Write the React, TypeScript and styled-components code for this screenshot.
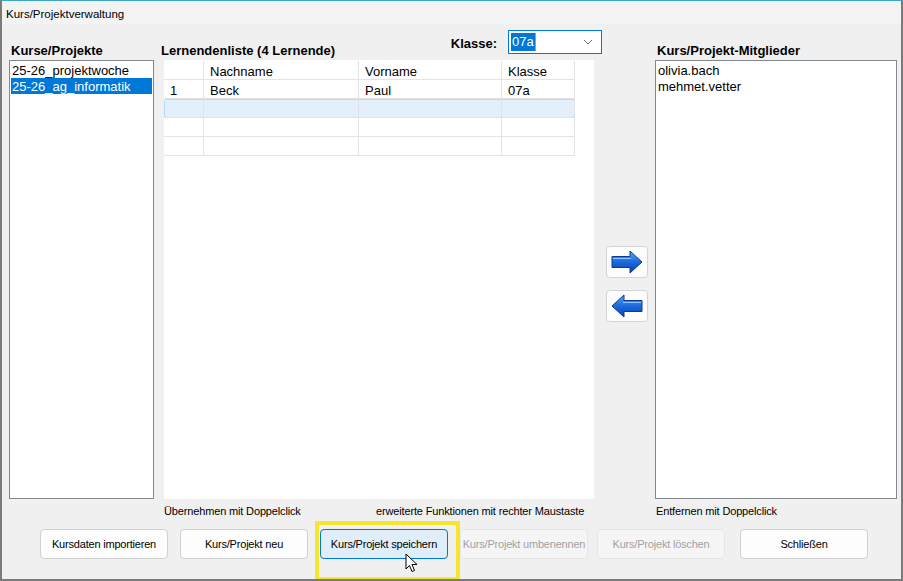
import React from 'react'
import styled, { createGlobalStyle } from 'styled-components'

const GlobalStyle = createGlobalStyle`
  html, body {
    margin: 0;
    padding: 0;
    background: #ffffff;
  }
  * {
    box-sizing: border-box;
  }
`

const FONT = `"Liberation Sans", Arial, sans-serif`

const Window = styled.div`
  position: relative;
  width: 903px;
  height: 581px;
  display: flex;
  flex-direction: column;
  background: #f0f0f0;
  border: 2px solid #7a7a7a;
  border-top: 1px solid #3aa6c6;
  font-family: ${FONT};
  color: #000;
  overflow: hidden;
`

const TitleBar = styled.div`
  height: 23px;
  display: flex;
  align-items: center;
  padding: 2px 0 0 4px;
  background: #f3f3f3;
  font-size: 11.5px;
`

const Body = styled.div`
  flex: 1;
  display: flex;
  flex-direction: column;
  padding: 0 4px 0 7px;
`

const Columns = styled.div`
  display: grid;
  grid-template-columns: 155px 430px 61px 242px;
`

const HeaderRow = styled(Columns)`
  height: 36px;
  align-items: end;
  padding-bottom: 1px;
`

const Heading = styled.div<{ $shift?: number }>`
  font-size: 13px;
  font-weight: 700;
  line-height: 16px;
  padding-left: 2px;
  margin-left: ${(p) => p.$shift ?? 0}px;
  white-space: nowrap;
`

const MidHeader = styled.div`
  display: flex;
  justify-content: space-between;
  align-items: end;
  height: 100%;
`

const KlasseGroup = styled.div`
  display: flex;
  align-items: center;
  gap: 11px;
  align-self: start;
  margin-top: 6px;
  margin-right: -8px;
`

const KlasseLabel = styled(Heading)`
  padding-top: 3px;
`

const Combo = styled.div`
  width: 94px;
  height: 24px;
  display: flex;
  align-items: center;
  padding: 0 8px 0 2px;
  background: #fff;
  border: 1px solid #0078d7;
  font-size: 13px;
`

const ComboValue = styled.span`
  background: #0078d7;
  color: #fff;
  line-height: 18px;
  padding: 0 1px;
  border-right: 1px solid #ff8a00;
`

const Chevron = styled.svg`
  margin-left: auto;
`

const MainRow = styled(Columns)`
  height: 439px;
`

const ListBox = styled.div<{ $width: number }>`
  width: ${(p) => p.$width}px;
  height: 100%;
  background: #fff;
  border: 1px solid #828790;
  padding: 1px;
`

const ListItem = styled.div<{ $selected?: boolean }>`
  height: 16px;
  line-height: 17px;
  font-size: 13px;
  padding-left: 1px;
  white-space: nowrap;
  background: ${(p) => (p.$selected ? '#0078d7' : 'transparent')};
  color: ${(p) => (p.$selected ? '#fff' : '#000')};
`

const GridArea = styled.div`
  background: #fff;
  padding-top: 1px;
`

const GridRow = styled.div<{ $selected?: boolean }>`
  display: grid;
  grid-template-columns: 40px 155px 143px 73px;
  width: 411px;
  height: 19px;
  background: ${(p) => (p.$selected ? '#e3f0fc' : '#fff')};
  box-shadow: ${(p) => (p.$selected ? 'inset 0 0 0 1px #b9dcf6' : 'none')};
  border-radius: ${(p) => (p.$selected ? '3px' : '0')};
`

const Cell = styled.div`
  height: 19px;
  line-height: 21px;
  font-size: 13px;
  padding-left: 6px;
  border-right: 1px solid #e3e3e3;
  border-bottom: 1px solid #e3e3e3;
  white-space: nowrap;
  overflow: hidden;
`

const ArrowColumn = styled.div`
  display: flex;
  flex-direction: column;
  gap: 12px;
  padding: 186px 0 0 12px;
`

const ArrowButton = styled.div`
  width: 42px;
  height: 32px;
  display: flex;
  align-items: center;
  justify-content: center;
  background: #fdfdfd;
  border: 1px solid #d4d4d4;
  border-radius: 4px;
`

const CaptionRow = styled(Columns)`
  height: 22px;
  align-items: center;
  font-size: 11px;
  letter-spacing: -0.15px;
  padding-top: 2px;
`

const MidCaptions = styled.div`
  display: grid;
  grid-template-columns: 212px 1fr;
  white-space: nowrap;
`

const Caption = styled.div<{ $shift?: number }>`
  white-space: nowrap;
  margin-left: ${(p) => p.$shift ?? 0}px;
`

const ButtonRow = styled.div`
  display: flex;
  gap: 12px;
  padding: 8px 0 0 31px;
`

const Button = styled.div<{ $variant?: 'hover' | 'disabled'; $gapAfter?: number }>`
  width: 128px;
  height: 30px;
  display: flex;
  align-items: center;
  justify-content: center;
  font-size: 11px;
  letter-spacing: -0.2px;
  white-space: nowrap;
  border-radius: 4px;
  border: 1px solid
    ${(p) => (p.$variant === 'hover' ? '#0078d7' : p.$variant === 'disabled' ? '#e6e6e6' : '#d0d0d0')};
  background: ${(p) => (p.$variant === 'hover' ? '#e0eef9' : p.$variant === 'disabled' ? '#f5f5f5' : '#fdfdfd')};
  color: ${(p) => (p.$variant === 'disabled' ? '#a2a2a2' : '#000')};
  margin-right: ${(p) => p.$gapAfter ?? 0}px;
`

// yellow marker drawn over the save button
const Highlight = styled.div`
  position: absolute;
  left: 313px;
  top: 520px;
  width: 145px;
  height: 60px;
  border: 4px solid #f6e52c;
  pointer-events: none;
`

const Cursor = styled.svg`
  position: absolute;
  left: 403px;
  top: 552px;
`

const RightArrow = () => (
  <svg width="32" height="24" viewBox="0 0 32 24">
    <defs>
      <linearGradient id="arrR" x1="0" y1="0" x2="0" y2="1">
        <stop offset="0" stopColor="#5aa6f5" />
        <stop offset="0.45" stopColor="#1f6fe0" />
        <stop offset="1" stopColor="#0a3fb0" />
      </linearGradient>
    </defs>
    <polygon
      points="1,6.5 19,6.5 19,1 31,12 19,23 19,17.5 1,17.5"
      fill="url(#arrR)"
      stroke="#0b3a96"
      strokeWidth="1"
      strokeLinejoin="round"
    />
    <polyline points="2,8.5 20,8.5" stroke="#8cc4ff" strokeWidth="1" fill="none" />
  </svg>
)

const LeftArrow = () => (
  <svg width="32" height="24" viewBox="0 0 32 24">
    <defs>
      <linearGradient id="arrL" x1="0" y1="0" x2="0" y2="1">
        <stop offset="0" stopColor="#5aa6f5" />
        <stop offset="0.45" stopColor="#1f6fe0" />
        <stop offset="1" stopColor="#0a3fb0" />
      </linearGradient>
    </defs>
    <polygon
      points="31,6.5 13,6.5 13,1 1,12 13,23 13,17.5 31,17.5"
      fill="url(#arrL)"
      stroke="#0b3a96"
      strokeWidth="1"
      strokeLinejoin="round"
    />
    <polyline points="12,8.5 30,8.5" stroke="#8cc4ff" strokeWidth="1" fill="none" />
  </svg>
)

const students = [
  { nr: '1', nachname: 'Beck', vorname: 'Paul', klasse: '07a' },
  { nr: '', nachname: '', vorname: '', klasse: '', selected: true },
  { nr: '', nachname: '', vorname: '', klasse: '' },
  { nr: '', nachname: '', vorname: '', klasse: '' },
]

const App: React.FC = () => {
  return (
    <>
      <GlobalStyle />
      <Window>
        <TitleBar>Kurs/Projektverwaltung</TitleBar>
        <Body>
          <HeaderRow>
            <Heading>Kurse/Projekte</Heading>
            <MidHeader>
              <Heading $shift={-5}>Lernendenliste (4 Lernende)</Heading>
              <KlasseGroup>
                <KlasseLabel>Klasse:</KlasseLabel>
                <Combo>
                  <ComboValue>07a</ComboValue>
                  <Chevron width="10" height="6" viewBox="0 0 10 6">
                    <polyline points="1,1 5,5 9,1" fill="none" stroke="#6d6d6d" strokeWidth="1" />
                  </Chevron>
                </Combo>
              </KlasseGroup>
            </MidHeader>
            <div />
            <Heading>Kurs/Projekt-Mitglieder</Heading>
          </HeaderRow>

          <MainRow>
            <ListBox $width={145}>
              <ListItem>25-26_projektwoche</ListItem>
              <ListItem $selected>25-26_ag_informatik</ListItem>
            </ListBox>

            <GridArea>
              <GridRow>
                <Cell />
                <Cell>Nachname</Cell>
                <Cell>Vorname</Cell>
                <Cell>Klasse</Cell>
              </GridRow>
              {students.map((s, i) => (
                <GridRow key={i} $selected={s.selected}>
                  <Cell>{s.nr}</Cell>
                  <Cell>{s.nachname}</Cell>
                  <Cell>{s.vorname}</Cell>
                  <Cell>{s.klasse}</Cell>
                </GridRow>
              ))}
            </GridArea>

            <ArrowColumn>
              <ArrowButton>
                <RightArrow />
              </ArrowButton>
              <ArrowButton>
                <LeftArrow />
              </ArrowButton>
            </ArrowColumn>

            <ListBox $width={242}>
              <ListItem>olivia.bach</ListItem>
              <ListItem>mehmet.vetter</ListItem>
            </ListBox>
          </MainRow>

          <CaptionRow>
            <div />
            <MidCaptions>
              <Caption>Übernehmen mit Doppelclick</Caption>
              <Caption>erweiterte Funktionen mit rechter Maustaste</Caption>
            </MidCaptions>
            <div />
            <Caption $shift={1}>Entfernen mit Doppelclick</Caption>
          </CaptionRow>

          <ButtonRow>
            <Button>Kursdaten importieren</Button>
            <Button>Kurs/Projekt neu</Button>
            <Button $variant="hover">Kurs/Projekt speichern</Button>
            <Button $variant="disabled" $gapAfter={-3}>Kurs/Projekt umbenennen</Button>
            <Button $variant="disabled" $gapAfter={3}>Kurs/Projekt löschen</Button>
            <Button>Schließen</Button>
          </ButtonRow>
        </Body>

        <Highlight />
        <Cursor width="13" height="20" viewBox="0 0 13 20">
          <polygon
            points="1,1 1,16 4.5,12.5 7,18.5 9.5,17.5 7,11.5 12,11.5"
            fill="#fff"
            stroke="#000"
            strokeWidth="1"
            strokeLinejoin="round"
          />
        </Cursor>
      </Window>
    </>
  )
}

export default App
